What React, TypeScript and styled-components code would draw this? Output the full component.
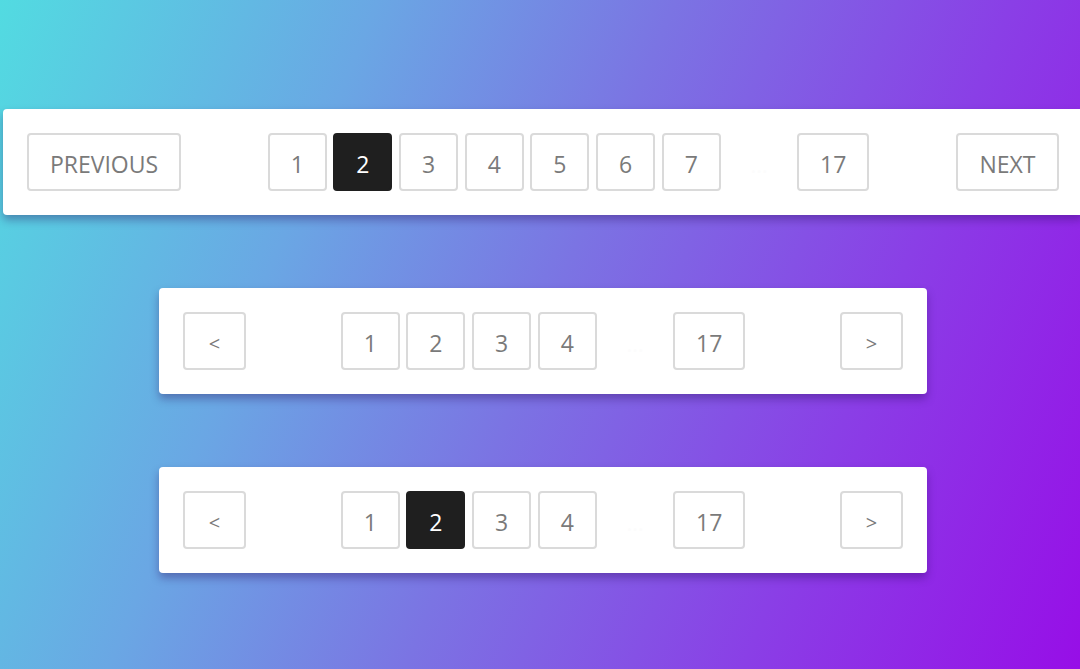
import React from "react";
import styled, { createGlobalStyle } from "styled-components";

const GlobalStyle = createGlobalStyle`
  html, body {
    margin: 0;
    padding: 0;
    height: 100%;
    overflow: hidden;
  }
  body {
    background: linear-gradient(112deg, #52dbe1 0%, #6aa7e4 28%, #7b74e3 50%, #8a3fe6 75%, #970ee7 100%);
    font-family: "Open Sans", "Noto Sans", sans-serif;
  }
`;

const Stage = styled.main`
  width: 1080px;
  margin-left: 3px;
  padding-top: 109px;
  display: flex;
  flex-direction: column;
  align-items: center;
  gap: 73px;
`;

const Card = styled.nav<{ $width: number }>`
  width: ${(p) => p.$width}px;
  flex-shrink: 0;
  box-sizing: border-box;
  padding: 24px;
  background: #ffffff;
  border-radius: 4px;
  box-shadow: 0 5px 9px rgba(40, 10, 90, 0.35);
  display: flex;
  align-items: center;
  justify-content: space-between;
`;

const Middle = styled.div`
  display: flex;
  align-items: center;
`;

const Pages = styled.div`
  display: flex;
  align-items: center;
  gap: 6.67px;
`;

const PageButton = styled.button<{ $active?: boolean; $width?: number }>`
  box-sizing: border-box;
  width: ${(p) => p.$width ?? 59}px;
  height: 58px;
  padding: 4px 0 0;
  border: 2px solid ${(p) => (p.$active ? "#1f1f1f" : "#dadada")};
  border-radius: 4px;
  background: ${(p) => (p.$active ? "#1f1f1f" : "#ffffff")};
  color: ${(p) => (p.$active ? "#ffffff" : "#7a7a7a")};
  font-family: "Open Sans", "Noto Sans", sans-serif;
  font-size: 23px;
  line-height: 1;
  display: flex;
  align-items: center;
  justify-content: center;
  cursor: pointer;
`;

const Arrow = styled.span`
  font-size: 20px;
  display: inline-block;
  transform: translateY(1px);
`;

const Ellipsis = styled.span`
  width: 76.5px;
  text-align: center;
  color: #fcfcfc;
  font-size: 22px;
  padding-top: 4px;
`;

type PagerProps = {
  width: number;
  pages: number[];
  last: number;
  active?: number;
  prev: React.ReactNode;
  next: React.ReactNode;
  prevWidth: number;
  nextWidth: number;
};

function Pager({ width, pages, last, active, prev, next, prevWidth, nextWidth }: PagerProps) {
  return (
    <Card $width={width}>
      <PageButton $width={prevWidth}>{prev}</PageButton>
      <Middle>
        <Pages>
          {pages.map((n) => (
            <PageButton key={n} $active={n === active}>
              {n}
            </PageButton>
          ))}
        </Pages>
        <Ellipsis>…</Ellipsis>
        <PageButton $width={72}>{last}</PageButton>
      </Middle>
      <PageButton $width={nextWidth}>{next}</PageButton>
    </Card>
  );
}

export default function App() {
  return (
    <>
      <GlobalStyle />
      <Stage>
        <Pager
          width={1080}
          pages={[1, 2, 3, 4, 5, 6, 7]}
          last={17}
          active={2}
          prev="PREVIOUS"
          next="NEXT"
          prevWidth={154}
          nextWidth={103}
        />
        <Pager
          width={768}
          pages={[1, 2, 3, 4]}
          last={17}
          prev={<Arrow>&lt;</Arrow>}
          next={<Arrow>&gt;</Arrow>}
          prevWidth={63}
          nextWidth={63}
        />
        <Pager
          width={768}
          pages={[1, 2, 3, 4]}
          last={17}
          active={2}
          prev={<Arrow>&lt;</Arrow>}
          next={<Arrow>&gt;</Arrow>}
          prevWidth={63}
          nextWidth={63}
        />
      </Stage>
    </>
  );
}
